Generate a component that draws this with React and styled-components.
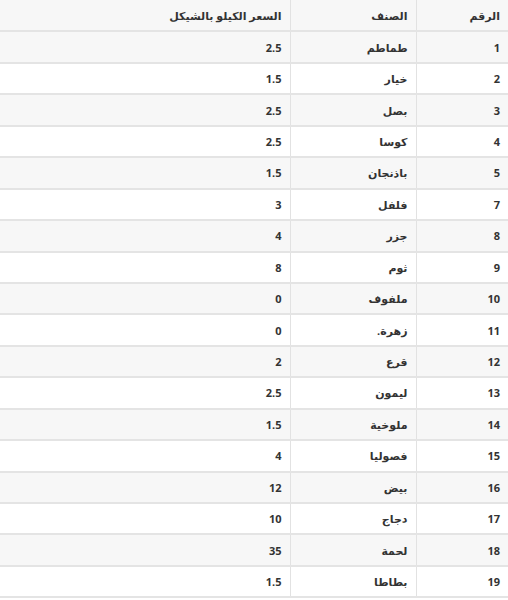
import React from 'react'
import styled, { createGlobalStyle } from 'styled-components'

const GlobalStyle = createGlobalStyle`
  html, body {
    margin: 0;
    padding: 0;
    background: #ffffff;
  }
  body {
    font-family: "Open Sans", "DejaVu Sans", sans-serif;
    color: #333333;
  }
`

const rows = [
  ['1', 'طماطم', '2.5'],
  ['2', 'خيار', '1.5'],
  ['3', 'بصل', '2.5'],
  ['4', 'كوسا', '2.5'],
  ['5', 'باذنجان', '1.5'],
  ['7', 'فلفل', '3'],
  ['8', 'جزر', '4'],
  ['9', 'ثوم', '8'],
  ['10', 'ملفوف', '0'],
  ['11', 'زهرة.', '0'],
  ['12', 'قرع', '2'],
  ['13', 'ليمون', '2.5'],
  ['14', 'ملوخية', '1.5'],
  ['15', 'فصوليا', '4'],
  ['16', 'بيض', '12'],
  ['17', 'دجاج', '10'],
  ['18', 'لحمة', '35'],
  ['19', 'بطاطا', '1.5'],
]

const Table = styled.table`
  direction: rtl;
  width: 508px;
  border-collapse: collapse;
  table-layout: fixed;
  font-size: 11px;
  font-weight: 700;
`

const Row = styled.tr`
  height: 31.45px;
  background: ${props => (props.shaded ? '#f7f7f7' : '#ffffff')};
`

const Cell = styled.td`
  text-align: right;
  padding: 0 8px 0 6px;
  border-bottom: 2px solid #e4e4e4;
  border-left: 1px solid #e2e2e2;
  vertical-align: middle;
  white-space: nowrap;
  &:last-child {
    border-left: none;
  }
`

const HeadCell = styled(Cell).attrs({ as: 'th' })`
  font-weight: 700;
`

export default function App() {
  return (
    <>
      <GlobalStyle />
      <Table>
        <colgroup>
          <col style={{ width: 92 }} />
          <col style={{ width: 126 }} />
          <col />
        </colgroup>
        <thead>
          <Row shaded>
            <HeadCell>الرقم</HeadCell>
            <HeadCell>الصنف</HeadCell>
            <HeadCell>السعر الكيلو بالشيكل</HeadCell>
          </Row>
        </thead>
        <tbody>
          {rows.map((r, i) => (
            <Row key={r[0]} shaded={i % 2 === 0}>
              <Cell>{r[0]}</Cell>
              <Cell>{r[1]}</Cell>
              <Cell>{r[2]}</Cell>
            </Row>
          ))}
        </tbody>
      </Table>
    </>
  )
}
